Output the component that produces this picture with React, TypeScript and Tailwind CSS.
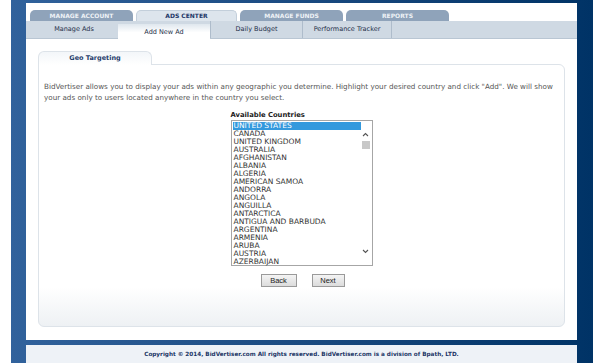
import React from "react";

const countries = [
  "UNITED STATES",
  "CANADA",
  "UNITED KINGDOM",
  "AUSTRALIA",
  "AFGHANISTAN",
  "ALBANIA",
  "ALGERIA",
  "AMERICAN SAMOA",
  "ANDORRA",
  "ANGOLA",
  "ANGUILLA",
  "ANTARCTICA",
  "ANTIGUA AND BARBUDA",
  "ARGENTINA",
  "ARMENIA",
  "ARUBA",
  "AUSTRIA",
  "AZERBAIJAN",
];

const mainTabs = ["MANAGE ACCOUNT", "ADS CENTER", "MANAGE FUNDS", "REPORTS"];
const subTabs = [
  { label: "Manage Ads", w: "w-[88px]" },
  { label: "Add New Ad", w: "w-[92px]" },
  { label: "Daily Budget", w: "w-[93px]" },
  { label: "Performance Tracker", w: "w-[89px]" },
];

export default function App() {
  return (
    <div className="w-[600px] h-[363px] bg-white px-[11px] overflow-hidden" style={{ fontFamily: '"DejaVu Sans", Verdana, sans-serif' }}>
      <div className="w-[582px] h-[363px] bg-gradient-to-r from-[#31629c] to-[#003366] pt-[3px] pl-[15px] pr-[16px] flex flex-col">
        {/* main white content */}
        <div className="h-[337px] bg-white flex flex-col">
          {/* main tabs */}
          <div className="flex gap-[3px] pl-[4px] pt-[7px] h-[18px]">
            {mainTabs.map((t, i) =>
              i === 1 ? (
                <div key={t} className="w-[101px] h-[11px] rounded-t-[5px] bg-[#dde5ed] border border-b-0 border-[#c3cfdb] flex items-center justify-center text-[6px] font-bold text-[#1b3566] leading-none">
                  {t}
                </div>
              ) : (
                <div key={t} className="w-[103px] h-[11px] rounded-t-[5px] bg-[#8fa3ba] flex items-center justify-center text-[6px] font-bold text-[#eef2f6] leading-none">
                  {t}
                </div>
              )
            )}
          </div>
          {/* sub tabs */}
          <div className="h-[18px] bg-[#cfd9e3] border-b border-[#b9c6d3] flex pl-[4px]">
            {subTabs.map((s, i) => (
              <div
                key={s.label}
                className={`${s.w} h-full flex items-center justify-center text-[6.5px] text-[#1e2e48] leading-none ${
                  i === 1 ? "bg-gradient-to-b from-[#dfe7ee] via-white to-white mt-[3px] h-[16px] pb-[1px]" : ""
                } ${i >= 2 ? "border-r border-[#aebccb]" : ""} ${i === 2 ? "border-l border-[#aebccb]" : ""}`}
              >
                {s.label}
              </div>
            ))}
          </div>
          {/* panel */}
          <div className="px-[12px] pt-[12px]">
            <div className="flex">
              <div className="w-[114px] h-[14px] rounded-t-[6px] border border-b-0 border-[#dde3e9] bg-gradient-to-b from-[#f3f6f9] to-white flex items-center justify-center text-[6.5px] font-bold text-[#1f3d6b] leading-none relative z-10 -mb-[1px]">
                Geo Targeting
              </div>
            </div>
            <div className="h-[263px] rounded-b-[6px] rounded-tr-[6px] border border-[#dde3e9] bg-gradient-to-b from-white via-white via-85% to-[#eef1f4] px-[5px] pt-[16px] flex flex-col">
              <p className="text-[7.2px] leading-[11px] text-[#555555]">
                BidVertiser allows you to display your ads within any geographic you determine. Highlight your desired country and click "Add". We will show your ads only to users located anywhere in the country you select.
              </p>
              <div className="flex flex-col items-center mt-[8px]">
                <div className="w-[142px]">
                  <div className="text-[6.8px] font-bold text-[#222] leading-[8px] mb-[1px]">Available Countries</div>
                  <div className="w-[142px] h-[146px] border border-[#a6a6a6] bg-white flex p-[1px]">
                    <div className="flex-1 flex flex-col">
                      {countries.map((c, i) => (
                        <div
                          key={c}
                          className={`h-[8px] leading-[8px] text-[7.5px] pl-[1px] whitespace-nowrap ${
                            i === 0 ? "bg-[#3399dd] text-white" : "text-[#333]"
                          }`}
                        >
                          {c}
                        </div>
                      ))}
                    </div>
                    <div className="w-[10px] flex flex-col items-center">
                      <svg width="7" height="5" viewBox="0 0 7 5" className="mt-[10px]">
                        <path d="M1 4 L3.5 1.5 L6 4" fill="none" stroke="#555" strokeWidth="1.1" />
                      </svg>
                      <div className="w-[8px] h-[8px] bg-[#c8c8c8] mt-[4px]" />
                      <div className="flex-1" />
                      <svg width="7" height="5" viewBox="0 0 7 5" className="mb-[10px]">
                        <path d="M1 1 L3.5 3.5 L6 1" fill="none" stroke="#555" strokeWidth="1.1" />
                      </svg>
                    </div>
                  </div>
                </div>
                <div className="flex gap-[15px] mt-[8px] ml-[2px]">
                  <button className="w-[36px] h-[13px] border border-[#9a9a9a] bg-gradient-to-b from-[#f4f4f4] to-[#dcdcdc] text-[7.5px] leading-none text-[#222]" style={{ fontFamily: '"Liberation Sans", Arial, sans-serif' }}>
                    Back
                  </button>
                  <button className="w-[33px] h-[13px] border border-[#9a9a9a] bg-gradient-to-b from-[#f4f4f4] to-[#dcdcdc] text-[7.5px] leading-none text-[#222]" style={{ fontFamily: '"Liberation Sans", Arial, sans-serif' }}>
                    Next
                  </button>
                </div>
              </div>
            </div>
          </div>
        </div>
        {/* footer */}
        <div className="mt-[5px] flex-1 bg-[#eef2f7] flex items-start justify-center pt-[7px]">
          <span className="text-[5.7px] font-bold text-[#1b3566] leading-none">
            Copyright © 2014, BidVertiser.com All rights reserved. BidVertiser.com is a division of Bpath, LTD.
          </span>
        </div>
      </div>
    </div>
  );
}
